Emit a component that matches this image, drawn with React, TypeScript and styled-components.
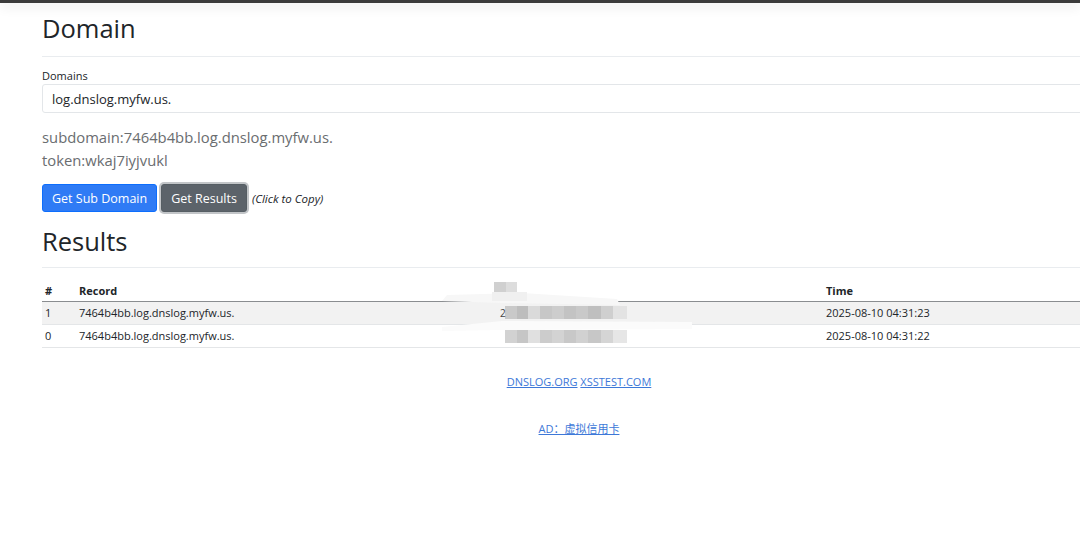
import React from "react";
import styled, { createGlobalStyle } from "styled-components";

const Global = createGlobalStyle`
  html, body { margin: 0; padding: 0; background: #fff; overflow: hidden; }
  body { font-family: "Open Sans", "Noto Sans", "Noto Sans CJK SC", sans-serif; color: #212529; }
  * { box-sizing: border-box; }
`;

const TopBar = styled.div`
  height: 3px;
  background: #3b3b3b;
  box-shadow: 0 3px 12px rgba(0, 0, 0, 0.16);
`;

const Container = styled.div`
  width: 1074px;
  margin-left: 42px;
`;

const Heading = styled.h2`
  margin: 0;
  font-size: 25.5px;
  font-weight: 400;
  line-height: 32px;
  color: #212529;
`;

const Rule = styled.hr`
  margin: 0;
  border: 0;
  border-top: 1px solid #e9ecef;
`;

const Label = styled.label`
  display: block;
  font-size: 11px;
  line-height: 14px;
  margin-bottom: 1px;
`;

const Input = styled.input`
  display: block;
  width: 100%;
  height: 29px;
  padding: 0 9px;
  font-family: inherit;
  font-size: 13px;
  color: #212529;
  border: 1px solid #e3e6e9;
  border-radius: 3px;
  outline: none;
`;

const InfoLine = styled.div`
  font-size: 14.8px;
  font-weight: 400;
  line-height: 23px;
  color: #6a6d70;
`;

const ButtonRow = styled.div`
  display: flex;
  align-items: center;
  gap: 4px;
`;

const Button = styled.button<{ $variant: "primary" | "secondary" }>`
  height: 28px;
  padding: 0 9px;
  font-family: inherit;
  font-size: 12.5px;
  color: #fff;
  border-radius: 3px;
  border: 1px solid ${(p) => (p.$variant === "primary" ? "#0d6efd" : "#565e64")};
  background: ${(p) => (p.$variant === "primary" ? "#2f7bf5" : "#5c636a")};
  box-shadow: ${(p) => (p.$variant === "secondary" ? "0 0 0 2px #c2c5c8" : "none")};
  cursor: pointer;
`;

const Hint = styled.em`
  font-size: 11.5px;
  margin-left: 1px;
  color: #212529;
`;

const TableWrap = styled.div`
  position: relative;
`;

const Table = styled.table`
  width: 100%;
  border-collapse: collapse;
  font-size: 11px;
`;

const Th = styled.th<{ $w?: number }>`
  width: ${(p) => (p.$w ? `${p.$w}px` : "auto")};
  text-align: left;
  font-weight: 700;
  height: 23px;
  padding: 0 3px;
  vertical-align: bottom;
  padding-bottom: 3px;
  border-bottom: 1px solid #8a8d90;
`;

const Tr = styled.tr<{ $striped?: boolean }>`
  background: ${(p) => (p.$striped ? "#f2f2f2" : "transparent")};
`;

const Td = styled.td`
  height: 23px;
  padding: 0 3px;
  border-bottom: 1px solid #e4e6e8;
  vertical-align: middle;
`;

const Mosaic = styled.svg`
  position: absolute;
  left: 400px;
  top: 0;
`;

const Footer = styled.div`
  text-align: center;
  font-size: 11px;
`;

const Link = styled.a`
  color: #3d78d8;
  text-decoration: underline;
`;

const Spacer = styled.div<{ $h: number }>`
  height: ${(p) => p.$h}px;
`;

export default function App() {
  return (
    <>
      <Global />
      <TopBar />
      <Container>
        <Spacer $h={9} />
        <Heading>Domain</Heading>
        <Spacer $h={12} />
        <Rule />
        <Spacer $h={12} />
        <Label>Domains</Label>
        <Input readOnly value="log.dnslog.myfw.us." />
        <Spacer $h={13} />
        <InfoLine>subdomain:7464b4bb.log.dnslog.myfw.us.</InfoLine>
        <InfoLine>token:wkaj7iyjvukl</InfoLine>
        <Spacer $h={12} />
        <ButtonRow>
          <Button $variant="primary">Get Sub Domain</Button>
          <Button $variant="secondary">Get Results</Button>
          <Hint>(Click to Copy)</Hint>
        </ButtonRow>
        <Spacer $h={13} />
        <Heading>Results</Heading>
        <Spacer $h={10} />
        <Rule />
        <Spacer $h={10} />
        <TableWrap>
          <Table>
            <thead>
              <tr>
                <Th $w={34}>#</Th>
                <Th $w={420}>Record</Th>
                <Th $w={327}></Th>
                <Th>Time</Th>
              </tr>
            </thead>
            <tbody>
              <Tr $striped>
                <Td>1</Td>
                <Td>7464b4bb.log.dnslog.myfw.us.</Td>
                <Td></Td>
                <Td>2025-08-10 04:31:23</Td>
              </Tr>
              <Tr>
                <Td>0</Td>
                <Td>7464b4bb.log.dnslog.myfw.us.</Td>
                <Td></Td>
                <Td>2025-08-10 04:31:22</Td>
              </Tr>
            </tbody>
          </Table>
          <Mosaic width="260" height="70" viewBox="0 0 260 70">
            <rect x="52" y="4" width="12" height="10" fill="#d0d0d0" />
            <rect x="64" y="4" width="11" height="10" fill="#dddddd" />
            <path d="M5 17 L80 15 L175 21 L178 27 L60 25 L0 23 Z" fill="#f7f7f7" />
            <rect x="50" y="14" width="35" height="9" fill="#f0f0f0" />
            <rect x="63" y="28" width="12" height="13" fill="#c9c9c9" />
            <rect x="75" y="28" width="11" height="13" fill="#bdbdbd" />
            <rect x="86" y="28" width="12" height="13" fill="#dadada" />
            <rect x="98" y="28" width="12" height="13" fill="#c7c7c7" />
            <rect x="110" y="28" width="12" height="13" fill="#cdcdcd" />
            <rect x="122" y="28" width="12" height="13" fill="#c3c3c3" />
            <rect x="134" y="28" width="12" height="13" fill="#c9c9c9" />
            <rect x="146" y="28" width="13" height="13" fill="#bfbfbf" />
            <rect x="159" y="28" width="12" height="13" fill="#cfcfcf" />
            <rect x="171" y="28" width="14" height="13" fill="#e3e3e3" />
            <text x="58" y="39" fontSize="10" fill="#444">2</text>
            <path d="M0 49 L60 43 L250 44 L250 51 L60 52 L0 53 Z" fill="#fbfbfb" />
            <rect x="63" y="52" width="12" height="13" fill="#d2d2d2" />
            <rect x="75" y="52" width="11" height="13" fill="#c6c6c6" />
            <rect x="86" y="52" width="12" height="13" fill="#e0e0e0" />
            <rect x="98" y="52" width="12" height="13" fill="#cccccc" />
            <rect x="110" y="52" width="12" height="13" fill="#d3d3d3" />
            <rect x="122" y="52" width="12" height="13" fill="#c8c8c8" />
            <rect x="134" y="52" width="12" height="13" fill="#d1d1d1" />
            <rect x="146" y="52" width="13" height="13" fill="#c7c7c7" />
            <rect x="159" y="52" width="12" height="13" fill="#d5d5d5" />
            <rect x="171" y="52" width="14" height="13" fill="#e6e6e6" />
          </Mosaic>
        </TableWrap>
        <Spacer $h={26} />
        <Footer>
          <Link href="#">DNSLOG.ORG</Link> <Link href="#">XSSTEST.COM</Link>
        </Footer>
        <Spacer $h={31} />
        <Footer>
          <Link href="#">AD：虚拟信用卡</Link>
        </Footer>
      </Container>
    </>
  );
}
